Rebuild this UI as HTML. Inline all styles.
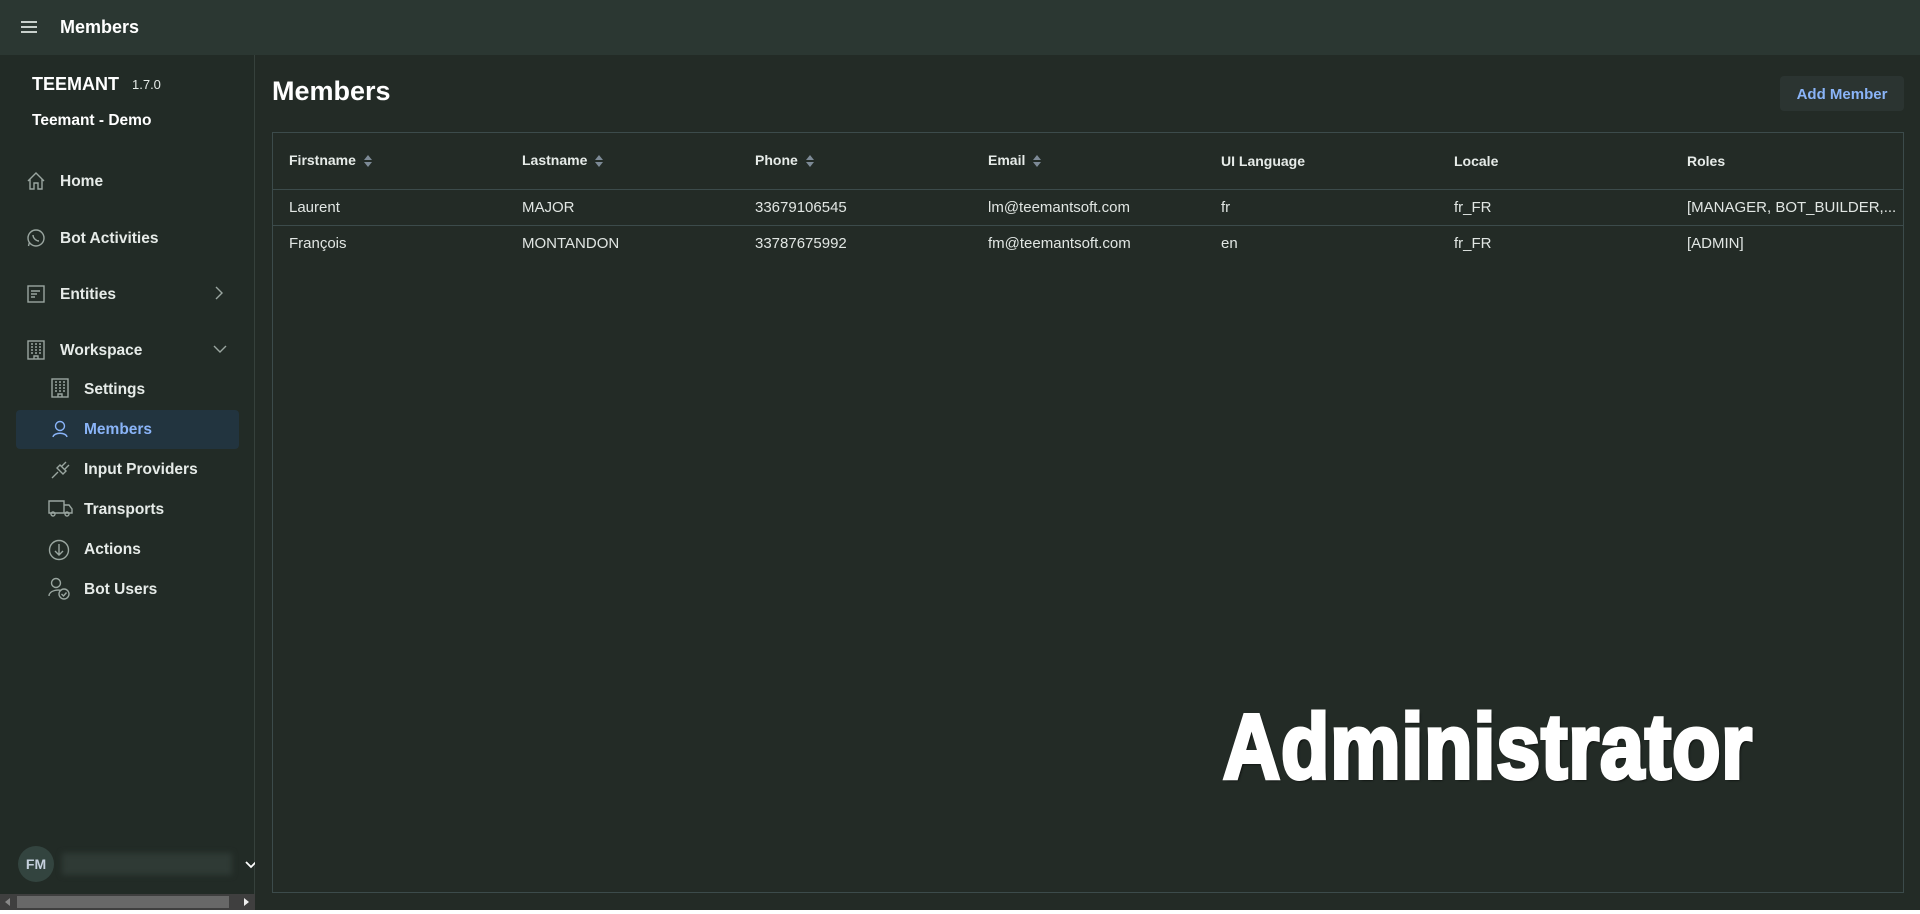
<!DOCTYPE html>
<html><head><meta charset="utf-8"><style>
*{box-sizing:border-box;margin:0;padding:0}
body{width:1920px;height:914px;overflow:hidden;background:#fff;font-family:"Liberation Sans",sans-serif;color:#e8ecea;position:relative}
.top{position:absolute;left:0;top:0;width:1920px;height:55px;background:#2b3732}
.top .t{position:absolute;left:60px;top:17px;font-size:18px;font-weight:bold;color:#fff}
.side{position:absolute;left:0;top:55px;width:255px;height:855px;background:#222b26;border-right:1px solid #36413c}
.main{position:absolute;left:255px;top:55px;width:1665px;height:855px;background:#232b26}
.abs{position:absolute;white-space:nowrap}
.nav{font-size:15.5px;font-weight:bold;color:#e6ebe8}
.ic{position:absolute;stroke:#9aa6a0;fill:none;stroke-width:1.4}
.table{position:absolute;left:17px;top:77px;width:1632px;height:761px;border:1px solid #3c4b4b}
.th{font-size:14px;font-weight:bold;color:#e6ebe8}
.td{font-size:15px;color:#e1e6e3}
.hr{position:absolute;left:0;width:100%;height:1px;background:#3c4b4b}
.sort{display:inline-block;margin-left:8px;vertical-align:middle}
</style></head><body>
<div class="top">
<svg class="ic" style="left:21px;top:20px" width="16" height="14"><path d="M0 2H16M0 7H16M0 12H16" stroke="#c8d0cc" stroke-width="2"/></svg>
<div class="t">Members</div>
</div>
<div class="side">
<div class="abs" style="left:32px;top:19px;font-size:18px;font-weight:bold;color:#fff">TEEMANT</div>
<div class="abs" style="left:132px;top:22px;font-size:13px;color:#e6ebe8">1.7.0</div>
<div class="abs" style="left:32px;top:57px;font-size:15.5px;font-weight:bold;color:#fff">Teemant - Demo</div>

<svg class="ic" style="left:26px;top:116px" width="20" height="20"><path d="M2 10L10 2L18 10M4 8V18H8V12H12V18H16V8"/></svg>
<div class="abs nav" style="left:60px;top:118px">Home</div>
<svg class="ic" style="left:26px;top:173px" width="20" height="20"><circle cx="10" cy="10" r="8"/><path d="M2.5 18L3.5 14M7 7c0 3 3 6 6 6"/></svg>
<div class="abs nav" style="left:60px;top:175px">Bot Activities</div>
<svg class="ic" style="left:26px;top:229px" width="20" height="20"><rect x="2" y="2" width="16" height="16"/><path d="M5 7H14M5 10H11M5 13H9"/></svg>
<div class="abs nav" style="left:60px;top:231px">Entities</div>
<svg class="ic" style="left:213px;top:231px" width="12" height="14"><path d="M3 1L9 7L3 13"/></svg>
<svg class="ic" style="left:26px;top:285px" width="20" height="20"><rect x="2" y="1" width="16" height="18"/><path d="M5 4H7M9 4H11M13 4H15M5 7H7M9 7H11M13 7H15M5 10H7M9 10H11M13 10H15M5 13H7M9 13H11M13 13H15M8 19V16H12V19"/></svg>
<div class="abs nav" style="left:60px;top:287px">Workspace</div>
<svg class="ic" style="left:213px;top:288px" width="14" height="12"><path d="M1 3L7 9L13 3"/></svg>

<svg class="ic" style="left:50px;top:323px" width="20" height="20"><rect x="2" y="1" width="16" height="18"/><path d="M5 4H7M9 4H11M13 4H15M5 7H7M9 7H11M13 7H15M5 10H7M9 10H11M13 10H15M5 13H7M9 13H11M13 13H15M8 19V16H12V19"/></svg>
<div class="abs nav" style="left:84px;top:326px">Settings</div>
<div class="abs" style="left:16px;top:355px;width:223px;height:39px;background:#22343f;border-radius:4px"></div>
<svg class="ic" style="left:50px;top:364px;stroke:#8ab4f8" width="20" height="20"><circle cx="10" cy="7" r="4.5"/><path d="M3 18C4 13 16 13 17 18"/></svg>
<div class="abs nav" style="left:84px;top:366px;color:#8ab4f8">Members</div>
<svg class="ic" style="left:50px;top:404px" width="22" height="20"><path d="M2 19L8 13M7 9L13 15L16 12L10 6ZM12 7L16 3M15 10L19 6"/></svg>
<div class="abs nav" style="left:84px;top:406px">Input Providers</div>
<svg class="ic" style="left:48px;top:443px" width="26" height="20"><path d="M1 3H16V15H1ZM16 7H21L24 11V15H16"/><circle cx="5" cy="16" r="2"/><circle cx="19" cy="16" r="2"/></svg>
<div class="abs nav" style="left:84px;top:446px">Transports</div>
<svg class="ic" style="left:48px;top:484px" width="22" height="22"><circle cx="11" cy="11" r="9.5"/><path d="M11 5V16M7 12L11 16L15 12"/></svg>
<div class="abs nav" style="left:84px;top:486px">Actions</div>
<svg class="ic" style="left:48px;top:522px" width="24" height="24"><circle cx="8" cy="6" r="4.5"/><path d="M1 19C1 13 12 12 13 14"/><circle cx="16" cy="17" r="5"/><path d="M13.5 17L15.5 19L18.5 15.5"/></svg>
<div class="abs nav" style="left:84px;top:526px">Bot Users</div>

<div class="abs" style="left:18px;top:791px;width:36px;height:36px;border-radius:50%;background:#33443f;color:#c5d0dd;font-size:14px;font-weight:bold;text-align:center;line-height:36px">FM</div>
<div class="abs" style="left:62px;top:798px;width:170px;height:22px;background:#2f3a35;filter:blur(3px)"></div>
<svg class="ic" style="left:245px;top:805px;stroke:#fff;stroke-width:1.8" width="12" height="10"><path d="M1 2L6 7L11 2"/></svg>
<div class="abs" style="left:0;top:839px;width:255px;height:16px;background:#3f3f3f"></div>
<div class="abs" style="left:17px;top:841px;width:212px;height:12px;background:#686868"></div>
<svg class="abs" style="left:5px;top:843px" width="6" height="8"><path d="M5 0L0 4L5 8Z" fill="#888"/></svg>
<svg class="abs" style="left:244px;top:843px" width="6" height="8"><path d="M0 0L5 4L0 8Z" fill="#eee"/></svg>
</div>
<div class="main">
<div class="abs" style="left:17px;top:21px;font-size:27px;font-weight:bold;color:#fff">Members</div>
<div class="abs" style="left:1525px;top:21px;width:124px;height:35px;background:#2b3431;border-radius:4px;color:#8ab4f8;font-size:15px;font-weight:bold;text-align:center;line-height:37px">Add Member</div>
<div class="table">
<div class="hr" style="top:56px"></div>
<div class="hr" style="top:92px"></div>
<div class="abs th" style="left:16px;top:19px">Firstname<svg class="sort" width="8" height="12"><path d="M4 0L8 5H0ZM4 12L8 7H0Z" fill="#7d8a96"/></svg></div>
<div class="abs th" style="left:249px;top:19px">Lastname<svg class="sort" width="8" height="12"><path d="M4 0L8 5H0ZM4 12L8 7H0Z" fill="#7d8a96"/></svg></div>
<div class="abs th" style="left:482px;top:19px">Phone<svg class="sort" width="8" height="12"><path d="M4 0L8 5H0ZM4 12L8 7H0Z" fill="#7d8a96"/></svg></div>
<div class="abs th" style="left:715px;top:19px">Email<svg class="sort" width="8" height="12"><path d="M4 0L8 5H0ZM4 12L8 7H0Z" fill="#7d8a96"/></svg></div>
<div class="abs th" style="left:948px;top:20px">UI Language</div>
<div class="abs th" style="left:1181px;top:20px">Locale</div>
<div class="abs th" style="left:1414px;top:20px">Roles</div>
<div class="abs td" style="left:16px;top:66px">Laurent</div>
<div class="abs td" style="left:249px;top:66px">MAJOR</div>
<div class="abs td" style="left:482px;top:66px">33679106545</div>
<div class="abs td" style="left:715px;top:66px">lm@teemantsoft.com</div>
<div class="abs td" style="left:948px;top:66px">fr</div>
<div class="abs td" style="left:1181px;top:66px">fr_FR</div>
<div class="abs td" style="left:1414px;top:66px">[MANAGER, BOT_BUILDER,...</div>
<div class="abs td" style="left:16px;top:102px">François</div>
<div class="abs td" style="left:249px;top:102px">MONTANDON</div>
<div class="abs td" style="left:482px;top:102px">33787675992</div>
<div class="abs td" style="left:715px;top:102px">fm@teemantsoft.com</div>
<div class="abs td" style="left:948px;top:102px">en</div>
<div class="abs td" style="left:1181px;top:102px">fr_FR</div>
<div class="abs td" style="left:1414px;top:102px">[ADMIN]</div>
</div>
<div class="abs" style="left:968px;top:646px;font-size:92px;line-height:92px;font-weight:bold;color:#fff;transform:scaleX(0.86);transform-origin:0 0;-webkit-text-stroke:4px #fff;text-shadow:2px 2px 3px #000,-1px -1px 1px #000;letter-spacing:1px">Administrator</div>
</div>
</body></html>
